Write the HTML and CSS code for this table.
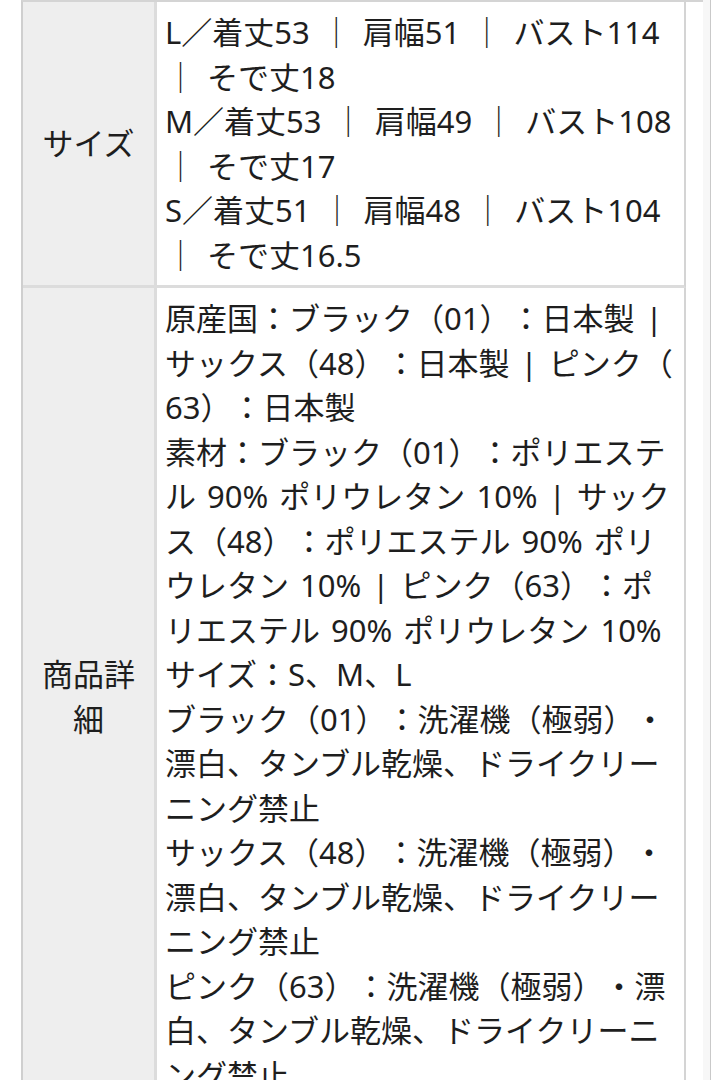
FILE: index.html
```html
<!DOCTYPE html>
<html lang="ja">
<head>
<meta charset="utf-8">
<title>商品情報</title>
<link rel="stylesheet" href="styles.css">
</head>
<body>
<div class="page">
  <div class="spec">
    <div class="label">サイズ</div>
    <div class="value">L／着丈53 ｜ 肩幅51 ｜ バスト114 ｜ そで丈18<br>M／着丈53 ｜ 肩幅49 ｜ バスト108 ｜ そで丈17<br>S／着丈51 ｜ 肩幅48 ｜ バスト104 ｜ そで丈16.5</div>
    <div class="label">商品詳細</div>
    <div class="value">原産国：ブラック（01）：日本製 | サックス（48）：日本製 | ピンク（63）：日本製<br>素材：ブラック（01）：ポリエステル 90% ポリウレタン 10% | サックス（48）：ポリエステル 90% ポリウレタン 10% | ピンク（63）：ポリエステル 90% ポリウレタン 10%<br>サイズ：S、M、L<br>ブラック（01）：洗濯機（極弱）・漂白、タンブル乾燥、ドライクリーニング禁止<br>サックス（48）：洗濯機（極弱）・漂白、タンブル乾燥、ドライクリーニング禁止<br>ピンク（63）：洗濯機（極弱）・漂白、タンブル乾燥、ドライクリーニング禁止</div>
  </div>
</div>
<div class="edge"></div>
</body>
</html>
```

FILE: styles.css
```css
html, body {
  margin: 0;
  padding: 0;
  background: #ffffff;
}
body {
  display: flex;
  min-height: 1080px;
  font-family: "Noto Sans", "Noto Sans CJK JP", sans-serif;
  color: #1e1e1e;
  font-size: 31px;
  line-height: 44.5px;
  text-spacing-trim: space-all;
}
.page {
  flex: 1;
  padding-left: 21px;
}
.edge {
  width: 7px;
  background: #f7f7f7;
  border-right: 1px solid #c9c9c9;
}
.spec {
  display: grid;
  grid-template-columns: 134px 529px;
  border-top: 2px solid #d4d4d4;
  border-left: 2px solid #cfcfcf;
}
.label {
  background: #eeeeee;
  border-right: 3px solid #dcdcdc;
  border-bottom: 3px solid #dcdcdc;
  padding: 8px;
  display: flex;
  align-items: center;
  justify-content: center;
  text-align: center;
}
.value {
  background: #ffffff;
  border-right: 2px solid #d4d4d4;
  border-bottom: 3px solid #dcdcdc;
  padding: 8px;
  line-break: anywhere;
  word-spacing: 3px;
}
```
